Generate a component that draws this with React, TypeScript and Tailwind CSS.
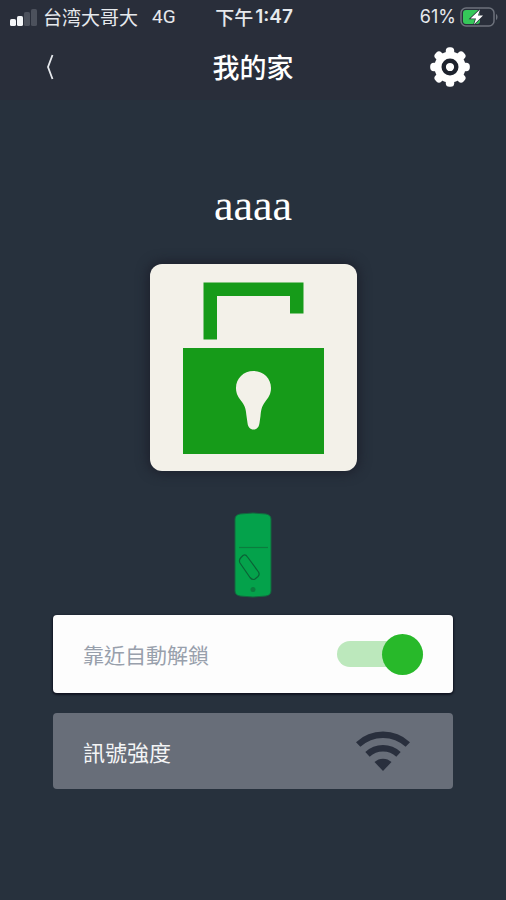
import { useState } from "react";

const SignalBars = () => (
    <svg viewBox="0 0 27 18" className="h-[18px] w-[27px]" aria-hidden="true">
        <rect x="0" y="11" width="6" height="7" rx="1.6" fill="#f4f6f8" />
        <rect x="7" y="8" width="6" height="10" rx="1.6" fill="#f4f6f8" />
        <rect x="14" y="4" width="6" height="14" rx="1.6" fill="#4c515c" />
        <rect x="21" y="1" width="6" height="17" rx="1.6" fill="#4c515c" />
    </svg>
);

const Battery = () => (
    <svg viewBox="0 0 38 20" className="h-5 w-[38px]" aria-hidden="true">
        <rect x="1" y="1" width="33" height="18" rx="5" fill="none" stroke="#6d727c" strokeWidth="1.5" />
        <path d="M36 7 C38 8 38 12 36 13 Z" fill="#6d727c" />
        <rect x="3" y="3" width="17" height="14" rx="3" fill="#35c759" />
        <path d="M20 2.5 L10.5 11.5 H16 L14 17.5 L23 8.5 H18 Z" fill="#ffffff" stroke="#292e3a" strokeWidth="1.5" paintOrder="stroke" />
    </svg>
);

const TEETH = [0, 45, 90, 135, 180, 225, 270, 315];

const GearIcon = () => (
    <svg viewBox="-20 -20 40 40" className="size-10" aria-hidden="true">
        <g fill="#ffffff">
            <circle r="15.6" />
            {TEETH.map((angle) => (
                <rect key={angle} x="-4.2" y="-19.8" width="8.4" height="12" rx="3.6" transform={`rotate(${angle})`} />
            ))}
        </g>
        <circle r="6.3" fill="none" stroke="#1d222d" strokeWidth="4.4" />
    </svg>
);

const UnlockedIcon = () => (
    <svg viewBox="0 0 207 207" className="w-full" aria-hidden="true">
        <path d="M53.5 75.5 V18.5 H153.5 V49.5 H140 V32 H67 V75.5 Z" fill="#169b19" />
        <rect x="33" y="84" width="141" height="106" fill="#169b19" />
        <path
            d="M103.5 107 C93.5 107 86 114.5 86 124 C86 130 88.5 133.5 92 138 C95.5 142.5 96 147 96.5 152 L97.5 159 C98 163 100 165.5 103.5 165.5 C107 165.5 109 163 109.5 159 L110.5 152 C111 147 111.5 142.5 115 138 C118.5 133.5 121 130 121 124 C121 114.5 113.5 107 103.5 107 Z"
            fill="#f3f1e9"
        />
    </svg>
);

// The lock body mounted on the door
const DeviceIcon = () => (
    <svg viewBox="0 0 38 86" className="h-[86px] w-[38px]" aria-hidden="true">
        <path d="M1 7 Q1 3 6 2 Q19 0 32 2 Q37 3 37 7 V79 Q37 83 32 84 Q19 86 6 84 Q1 83 1 79 Z" fill="#04a24b" stroke="#14663f" strokeWidth="1" />
        <path d="M5 35.5 H34" stroke="#0b7d3e" strokeWidth="1.2" />
        <path
            d="M6 51 Q4.5 48 7 45.5 L9 43.5 Q11.5 42 13.5 45 L24.5 60 Q26 62.5 24 64.500 L21 67 Q18.5 68.500 16 65.500 Z"
            fill="none"
            stroke="#0b6236"
            strokeWidth="1.2"
            strokeLinejoin="round"
        />
        <circle cx="19" cy="77.5" r="2.5" fill="#0b7d3e" />
    </svg>
);

const WifiIcon = () => (
    <svg viewBox="0 0 54 40" className="h-10 w-[54px]" role="img" aria-label="Wi-Fi">
        <g fill="none" stroke="#292f3d" strokeWidth="6.4">
            <path d="M2.2 13.5 A36.3 36.3 0 0 1 51.8 13.5" />
            <path d="M11.5 23.4 A22.7 22.7 0 0 1 42.5 23.4" />
        </g>
        <path d="M18.5 31 A12.5 12.5 0 0 1 35.5 31 L27 40 Z" fill="#292f3d" />
    </svg>
);

export default function App() {
    const [autoUnlock, setAutoUnlock] = useState(true);

    return (
        <div className="flex min-h-screen w-full flex-col bg-[#27313d] font-['Noto_Sans_CJK_TC',sans-serif] text-white">
            <header className="bg-[#292e3a]">
                {/* Status bar */}
                <div className="grid h-[34px] grid-cols-[1fr_auto_1fr] items-center pr-2 pl-[10px] text-[19px] leading-6 text-[#e6e9ed]">
                    <div className="flex items-center gap-[6px] whitespace-nowrap">
                        <SignalBars />
                        <span>台湾大哥大</span>
                        <span className="ml-2 font-[Roboto,sans-serif]">4G</span>
                    </div>
                    <div className="flex items-center gap-[2px] whitespace-nowrap">
                        <span className="font-medium">下午</span>
                        <span className="font-[Inter,sans-serif] font-semibold">1:47</span>
                    </div>
                    <div className="flex items-center justify-end gap-1">
                        <span className="font-[Inter,sans-serif] text-lg leading-6">61%</span>
                        <Battery />
                    </div>
                </div>

                {/* Title bar */}
                <div className="grid h-[66px] grid-cols-[1fr_auto_1fr] items-center px-9">
                    <button type="button" aria-label="返回" className="flex h-10 w-7 items-center justify-center">
                        <svg viewBox="0 0 8 26" className="h-[26px] w-2" aria-hidden="true">
                            <path d="M6.5 1 L2 13 L6.5 25" fill="none" stroke="#e6e9ed" strokeWidth="1.8" />
                        </svg>
                    </button>
                    <h1 className="text-[27px] leading-8 font-medium">我的家</h1>
                    <button type="button" aria-label="設定" className="justify-self-end">
                        <GearIcon />
                    </button>
                </div>
            </header>

            <main className="flex flex-col items-center px-[53px] pt-20 pb-10">
                <h2 className="font-['Liberation_Serif',serif] text-[44px] leading-[52px]">aaaa</h2>

                <button
                    type="button"
                    aria-label="開鎖"
                    className="mt-8 w-[207px] overflow-hidden rounded-xl bg-[#f3f1e9] shadow-[0_0_12px_2px_#1d202c]"
                >
                    <UnlockedIcon />
                </button>

                <div className="mt-[41px]">
                    <DeviceIcon />
                </div>

                <div className="mt-[17px] flex w-full flex-col gap-5 leading-7">
                    <label className="flex h-[78px] items-center justify-between rounded bg-[#fdfdfd] px-[30px] text-[21px] text-[#98a0ac] shadow-[0_1px_2px_1px_#111522]">
                        <span>靠近自動解鎖</span>
                        <input
                            type="checkbox"
                            role="switch"
                            checked={autoUnlock}
                            onChange={(e) => setAutoUnlock(e.target.checked)}
                            className="flex h-[41px] w-[86px] cursor-pointer appearance-none items-center before:h-[26px] before:w-full before:shrink-0 before:rounded-full before:bg-gray-300 after:-ml-[86px] after:size-[41px] after:shrink-0 after:rounded-full after:bg-gray-400 checked:before:bg-[#bce8bc] checked:after:-ml-[41px] checked:after:bg-[#28b92a]"
                        />
                    </label>

                    <div className="flex h-[76px] items-center justify-between rounded bg-[#686e79] pr-[43px] pl-[30px] text-[22px] text-[#f4f5f6]">
                        <span>訊號強度</span>
                        <WifiIcon />
                    </div>
                </div>
            </main>
        </div>
    );
}
